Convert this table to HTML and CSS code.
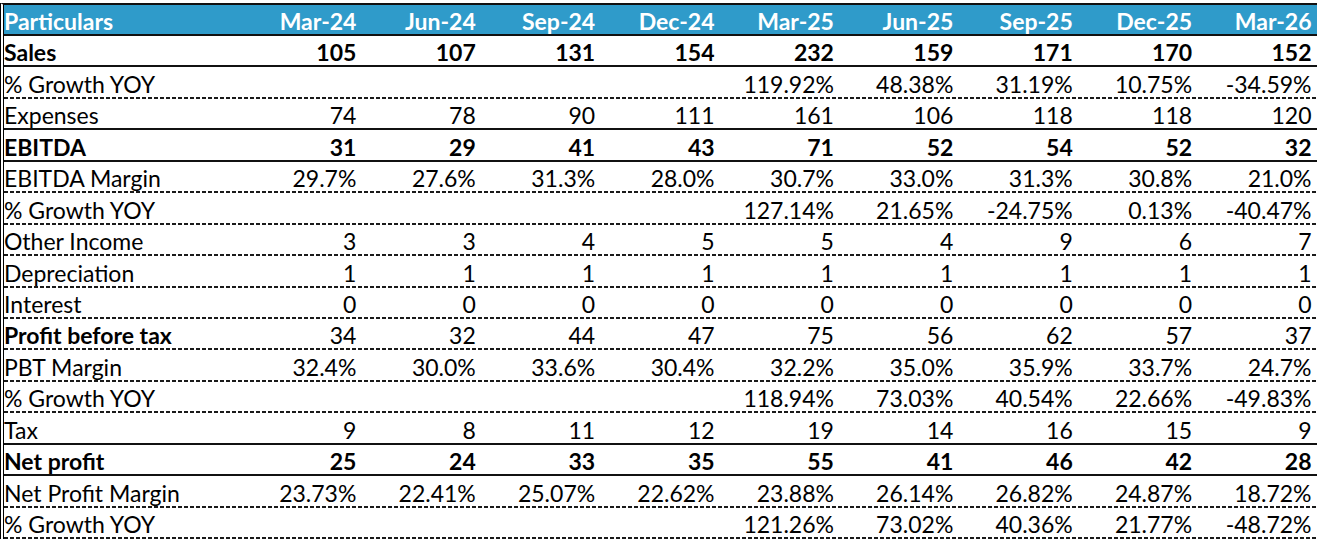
FILE: index.html
```html
<!DOCTYPE html>
<html>
<head>
<meta charset="utf-8">
<link rel="stylesheet" href="styles.css">
</head>
<body>
<div class="sheet">
  <div class="row head"><div class="c lab">Particulars</div><div class="c">Mar-24</div><div class="c">Jun-24</div><div class="c">Sep-24</div><div class="c">Dec-24</div><div class="c">Mar-25</div><div class="c">Jun-25</div><div class="c">Sep-25</div><div class="c">Dec-25</div><div class="c">Mar-26</div></div>
  <div class="row solid bold"><div class="c lab">Sales</div><div class="c">105</div><div class="c">107</div><div class="c">131</div><div class="c">154</div><div class="c">232</div><div class="c">159</div><div class="c">171</div><div class="c">170</div><div class="c">152</div></div>
  <div class="row dash"><div class="c lab">% Growth YOY</div><div class="c"></div><div class="c"></div><div class="c"></div><div class="c"></div><div class="c">119.92%</div><div class="c">48.38%</div><div class="c">31.19%</div><div class="c">10.75%</div><div class="c">-34.59%</div></div>
  <div class="row solid"><div class="c lab">Expenses</div><div class="c">74</div><div class="c">78</div><div class="c">90</div><div class="c">111</div><div class="c">161</div><div class="c">106</div><div class="c">118</div><div class="c">118</div><div class="c">120</div></div>
  <div class="row solid bold"><div class="c lab">EBITDA</div><div class="c">31</div><div class="c">29</div><div class="c">41</div><div class="c">43</div><div class="c">71</div><div class="c">52</div><div class="c">54</div><div class="c">52</div><div class="c">32</div></div>
  <div class="row dash"><div class="c lab">EBITDA Margin</div><div class="c">29.7%</div><div class="c">27.6%</div><div class="c">31.3%</div><div class="c">28.0%</div><div class="c">30.7%</div><div class="c">33.0%</div><div class="c">31.3%</div><div class="c">30.8%</div><div class="c">21.0%</div></div>
  <div class="row dash"><div class="c lab">% Growth YOY</div><div class="c"></div><div class="c"></div><div class="c"></div><div class="c"></div><div class="c">127.14%</div><div class="c">21.65%</div><div class="c">-24.75%</div><div class="c">0.13%</div><div class="c">-40.47%</div></div>
  <div class="row dash"><div class="c lab">Other Income</div><div class="c">3</div><div class="c">3</div><div class="c">4</div><div class="c">5</div><div class="c">5</div><div class="c">4</div><div class="c">9</div><div class="c">6</div><div class="c">7</div></div>
  <div class="row dash"><div class="c lab">Depreciation</div><div class="c">1</div><div class="c">1</div><div class="c">1</div><div class="c">1</div><div class="c">1</div><div class="c">1</div><div class="c">1</div><div class="c">1</div><div class="c">1</div></div>
  <div class="row dash"><div class="c lab">Interest</div><div class="c">0</div><div class="c">0</div><div class="c">0</div><div class="c">0</div><div class="c">0</div><div class="c">0</div><div class="c">0</div><div class="c">0</div><div class="c">0</div></div>
  <div class="row dash"><div class="c lab b">Profit before tax</div><div class="c">34</div><div class="c">32</div><div class="c">44</div><div class="c">47</div><div class="c">75</div><div class="c">56</div><div class="c">62</div><div class="c">57</div><div class="c">37</div></div>
  <div class="row dash"><div class="c lab">PBT Margin</div><div class="c">32.4%</div><div class="c">30.0%</div><div class="c">33.6%</div><div class="c">30.4%</div><div class="c">32.2%</div><div class="c">35.0%</div><div class="c">35.9%</div><div class="c">33.7%</div><div class="c">24.7%</div></div>
  <div class="row dash"><div class="c lab">% Growth YOY</div><div class="c"></div><div class="c"></div><div class="c"></div><div class="c"></div><div class="c">118.94%</div><div class="c">73.03%</div><div class="c">40.54%</div><div class="c">22.66%</div><div class="c">-49.83%</div></div>
  <div class="row solid"><div class="c lab">Tax</div><div class="c">9</div><div class="c">8</div><div class="c">11</div><div class="c">12</div><div class="c">19</div><div class="c">14</div><div class="c">16</div><div class="c">15</div><div class="c">9</div></div>
  <div class="row solid bold"><div class="c lab">Net profit</div><div class="c">25</div><div class="c">24</div><div class="c">33</div><div class="c">35</div><div class="c">55</div><div class="c">41</div><div class="c">46</div><div class="c">42</div><div class="c">28</div></div>
  <div class="row dash"><div class="c lab">Net Profit Margin</div><div class="c">23.73%</div><div class="c">22.41%</div><div class="c">25.07%</div><div class="c">22.62%</div><div class="c">23.88%</div><div class="c">26.14%</div><div class="c">26.82%</div><div class="c">24.87%</div><div class="c">18.72%</div></div>
  <div class="row dash"><div class="c lab">% Growth YOY</div><div class="c"></div><div class="c"></div><div class="c"></div><div class="c"></div><div class="c">121.26%</div><div class="c">73.02%</div><div class="c">40.36%</div><div class="c">21.77%</div><div class="c">-48.72%</div></div>
</div>
</body>
</html>
```

FILE: styles.css
```css
html, body {
  margin: 0;
  padding: 0;
  background: #ffffff;
}
body {
  padding-top: 3px;
  font-family: Lato, "Open Sans", sans-serif;
  color: #000000;
}
.sheet {
  width: 1315px;
  border-left: 4px double #000000;
  border-top: 2px solid #111111;
}
.row {
  display: grid;
  grid-template-columns: 236px repeat(9, 119.4px);
  height: 31.44px;
  box-sizing: border-box;
  font-size: 23px;
  line-height: 25px;
}
.row.head {
  height: 31px;
  background: #2f9bca;
  color: #ffffff;
  font-weight: 700;
  border-bottom: 2px solid #111111;
}
.row.solid {
  border-bottom: 2px solid #111111;
}
.row.dash {
  padding-bottom: 2px;
  background-image: repeating-linear-gradient(to right, #1a1a1a 0 4px, transparent 4px 6px);
  background-size: 100% 2px;
  background-position: left bottom;
  background-repeat: no-repeat;
}
.row.bold {
  font-weight: 700;
}
.c {
  display: flex;
  align-items: flex-end;
  justify-content: flex-end;
  padding-right: 3px;
  white-space: nowrap;
}
.c.lab {
  justify-content: flex-start;
  padding-left: 0;
  padding-right: 0;
}
.c.b {
  font-weight: 700;
}
```
